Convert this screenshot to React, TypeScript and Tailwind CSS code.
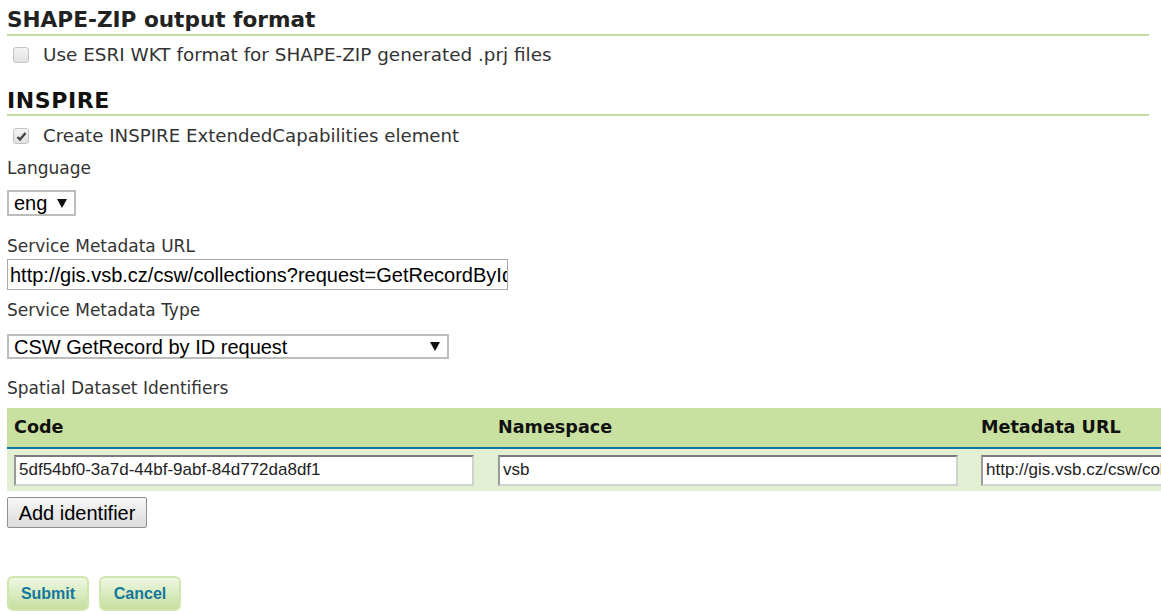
import React from "react";

const label = "text-[17px] text-[#333] leading-[20px]";
const cbLabel = "text-[18.4px] text-[#333] leading-[20px]";
const arial = { fontFamily: '"Liberation Sans", Arial, sans-serif' };

function Check({ checked }: { checked?: boolean }) {
  return (
    <span className="inline-flex h-[16px] w-[16px] shrink-0 items-center justify-center rounded-[3px] border border-[#c4c4c4] bg-gradient-to-b from-[#f4f4f4] to-[#e2e2e2]">
      {checked && (
        <svg width="11" height="11" viewBox="0 0 11 11">
          <path d="M1.5 6 L4 8.5 L9.5 2" fill="none" stroke="#444" strokeWidth="2.4" />
        </svg>
      )}
    </span>
  );
}

function Caret() {
  return (
    <svg width="10" height="9" viewBox="0 0 10 9">
      <path d="M0 0 H10 L5 9 Z" fill="#111" />
    </svg>
  );
}

export default function App() {
  return (
    <div
      className="w-[1161px] h-[614px] overflow-hidden bg-white text-[#333]"
      style={{ fontFamily: '"DejaVu Sans", Verdana, sans-serif' }}
    >
      <div className="pl-[7px] pr-[12px] pt-[8px]">
        <h2 className="text-[21.6px] font-bold leading-[23px] text-[#222] pb-[3px] border-b-2 border-[#c5df9e]">
          SHAPE-ZIP output format
        </h2>
        <div className="mt-[9px] flex items-center gap-[14px] pl-[6px] h-[20px]">
          <Check />
          <span className={cbLabel}>Use ESRI WKT format for SHAPE-ZIP generated .prj files</span>
        </div>

        <h2 className="mt-[24px] text-[22px] font-bold leading-[24px] tracking-[0.6px] text-[#111] pb-[1px] border-b-2 border-[#c5df9e]">
          INSPIRE
        </h2>
        <div className="mt-[10px] flex items-center gap-[14px] pl-[6px] h-[20px]">
          <Check checked />
          <span className="text-[18.2px] text-[#333] leading-[20px]">Create INSPIRE ExtendedCapabilities element</span>
        </div>

        <div className={`mt-[12px] ${label}`}>Language</div>
        <div
          className="mt-[12px] flex h-[26px] w-[69px] items-center justify-between border-2 border-[#bdbdbd] pl-[5px] pr-[7px] text-[20px] text-black"
          style={arial}
        >
          <span>eng</span>
          <Caret />
        </div>

        <div className={`mt-[20px] ${label}`}>Service Metadata URL</div>
        <div
          className="mt-[3px] flex h-[31px] w-[501px] items-center overflow-hidden whitespace-nowrap border border-[#a9a9a9] pl-[2px] text-[20px] text-black"
          style={arial}
        >
          http://gis.vsb.cz/csw/collections?request=GetRecordById&amp;service=CSW
        </div>

        <div className={`mt-[10px] ${label}`}>Service Metadata Type</div>
        <div
          className="mt-[14px] flex h-[25px] w-[442px] items-center justify-between border-2 border-[#bdbdbd] pl-[5px] pr-[7px] text-[20px] text-black"
          style={arial}
        >
          <span>CSW GetRecord by ID request</span>
          <Caret />
        </div>

        <div className={`mt-[19px] ${label}`}>Spatial Dataset Identifiers</div>

        <div className="mt-[10px] w-[1460px]">
          <div className="grid grid-cols-[484px_483px_493px] h-[39px] items-center bg-[#c8e0a0] text-[17.6px] font-bold text-[#111]">
            <div className="pl-[7px]">Code</div>
            <div className="pl-[7px]">Namespace</div>
            <div className="pl-[7px]">Metadata URL</div>
          </div>
          <div className="h-[2px] bg-[#0a78a0]" />
          <div
            className="grid grid-cols-[484px_483px_493px] h-[42px] items-center bg-[#e2efd3] text-[17px] text-[#222]"
            style={arial}
          >
            {["5df54bf0-3a7d-44bf-9abf-84d772da8df1", "vsb", "http://gis.vsb.cz/csw/collections"].map((v, i) => (
              <div key={i} className="pl-[7px]">
                <div className="flex h-[31px] w-[460px] items-center overflow-hidden whitespace-nowrap border-2 border-t-[#7a7a7a] border-l-[#9a9a9a] border-b-[#d0d0d0] border-r-[#d0d0d0] bg-white pl-[3px]">
                  {v}
                </div>
              </div>
            ))}
          </div>
        </div>

        <button
          className="mt-[6px] flex h-[31px] w-[140px] items-center justify-center rounded-[2px] border border-[#8f8f8f] bg-gradient-to-b from-[#f7f7f7] to-[#dcdcdc] text-[20px] text-black"
          style={arial}
        >
          Add identifier
        </button>

        <div className="mt-[48px] flex gap-[10px]" style={arial}>
          {["Submit", "Cancel"].map((t) => (
            <button
              key={t}
              className="flex h-[35px] w-[82px] items-center justify-center rounded-[6px] border-2 border-[#cfe6ae] bg-gradient-to-b from-[#eef7e2] to-[#c6df9e] text-[16px] font-bold text-[#14779e]"
            >
              {t}
            </button>
          ))}
        </div>
      </div>
    </div>
  );
}
